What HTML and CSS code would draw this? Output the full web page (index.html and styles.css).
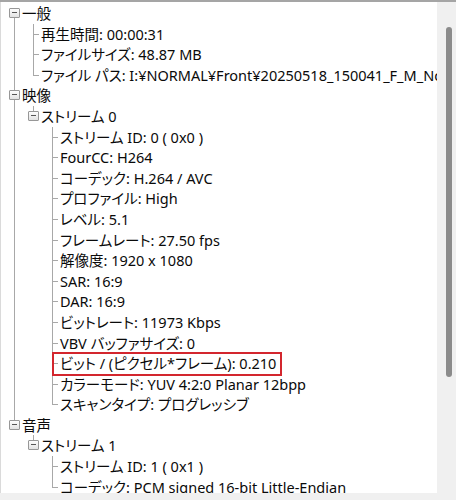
FILE: index.html
```html
<!DOCTYPE html>
<html lang="ja">
<head>
    <meta charset="UTF-8">
    <meta name="viewport" content="width=device-width, initial-scale=1.0">
    <title>MediaInfo</title>
    <link rel="stylesheet" href="styles.css">
</head>
<body>
    <div class="window">
        <div class="view">
            <ul class="tree">
                <li class="open">
                    <div class="row"><span class="box"></span>一般</div>
                    <ul>
                        <li><div class="row">再生時間: 00:00:31</div></li>
                        <li><div class="row">ファイルサイズ: 48.87 MB</div></li>
                        <li><div class="row">ファイル パス: I:¥NORMAL¥Front¥20250518_150041_F_M_Normal.mp4</div></li>
                    </ul>
                </li>
                <li class="open">
                    <div class="row"><span class="box"></span>映像</div>
                    <ul>
                        <li class="open">
                            <div class="row"><span class="box"></span>ストリーム 0</div>
                            <ul>
                                <li><div class="row">ストリーム ID: 0 ( 0x0 )</div></li>
                                <li><div class="row">FourCC: H264</div></li>
                                <li><div class="row">コーデック: H.264 / AVC</div></li>
                                <li><div class="row">プロファイル: High</div></li>
                                <li><div class="row">レベル: 5.1</div></li>
                                <li><div class="row">フレームレート: 27.50 fps</div></li>
                                <li><div class="row">解像度: 1920 x 1080</div></li>
                                <li><div class="row">SAR: 16:9</div></li>
                                <li><div class="row">DAR: 16:9</div></li>
                                <li><div class="row">ビットレート: 11973 Kbps</div></li>
                                <li><div class="row">VBV バッファサイズ: 0</div></li>
                                <li><div class="row"><span class="mark">ビット / (ピクセル*フレーム): 0.210</span></div></li>
                                <li><div class="row">カラーモード: YUV 4:2:0 Planar 12bpp</div></li>
                                <li><div class="row">スキャンタイプ: プログレッシブ</div></li>
                            </ul>
                        </li>
                    </ul>
                </li>
                <li class="open">
                    <div class="row"><span class="box"></span>音声</div>
                    <ul>
                        <li class="open">
                            <div class="row"><span class="box"></span>ストリーム 1</div>
                            <ul>
                                <li><div class="row">ストリーム ID: 1 ( 0x1 )</div></li>
                                <li><div class="row">コーデック: PCM signed 16-bit Little-Endian</div></li>
                            </ul>
                        </li>
                    </ul>
                </li>
            </ul>
        </div>
        <div class="scroll">
            <div class="thumb"></div>
        </div>
    </div>
</body>
</html>
```

FILE: styles.css
```css
body, html {
    margin: 0;
    padding: 0;
    background-color: #f0f0f0;
}
.window {
    width: 456px;
    height: 493px;
    border-top: 2px solid #a5a5a5;
    box-sizing: border-box;
    display: flex;
    font-family: "Noto Sans", "Noto Sans CJK JP", sans-serif;
    font-size: 14.5px;
    font-feature-settings: "palt";
    color: #0a0a0a;
}
.view {
    width: 436px;
    background-color: #fff;
    border-left: 1px solid #dadada;
    overflow: hidden;
    padding-top: 1px;
}
.scroll {
    flex: 1;
}
.thumb {
    width: 6px;
    height: 350px;
    margin: 25px 0 0 9px;
    border-radius: 3px;
    background-color: #8b8b8b;
}
.tree, .tree ul {
    list-style-type: none;
    margin: 0;
    padding: 0;
}
.tree ul {
    padding-left: 19px;
}
.tree li {
    position: relative;
}
.row {
    position: relative;
    height: 20.6px;
    line-height: 20.6px;
    padding-left: 21px;
    white-space: nowrap;
    z-index: 1;
}
/* vertical tree lines */
.tree li::before {
    content: "";
    position: absolute;
    left: 13px;
    top: 0;
    bottom: 0;
    border-left: 1px solid #a8a8a8;
}
.tree li:last-child::before {
    bottom: auto;
    height: 10px;
}
.tree > li:first-child::before {
    top: 10px;
}
.tree > li:last-child::before {
    top: 0;
}
/* horizontal connectors */
.tree ul li::after {
    content: "";
    position: absolute;
    left: 13px;
    top: 10px;
    width: 6px;
    border-top: 1px solid #a8a8a8;
}
.box {
    position: absolute;
    left: 8px;
    top: 5px;
    width: 9px;
    height: 8px;
    border: 1px solid #979797;
    border-radius: 1px;
    background: linear-gradient(#fdfdfd, #e2e2e2);
}
.box::after {
    content: "";
    position: absolute;
    left: 2px;
    top: 3px;
    width: 5px;
    border-top: 1px solid #555;
}
.mark {
    position: relative;
    display: inline-block;
}
.mark::after {
    content: "";
    position: absolute;
    left: -8px;
    right: -6px;
    top: -1px;
    bottom: -2px;
    border: 2px solid #d3262e;
}
```
